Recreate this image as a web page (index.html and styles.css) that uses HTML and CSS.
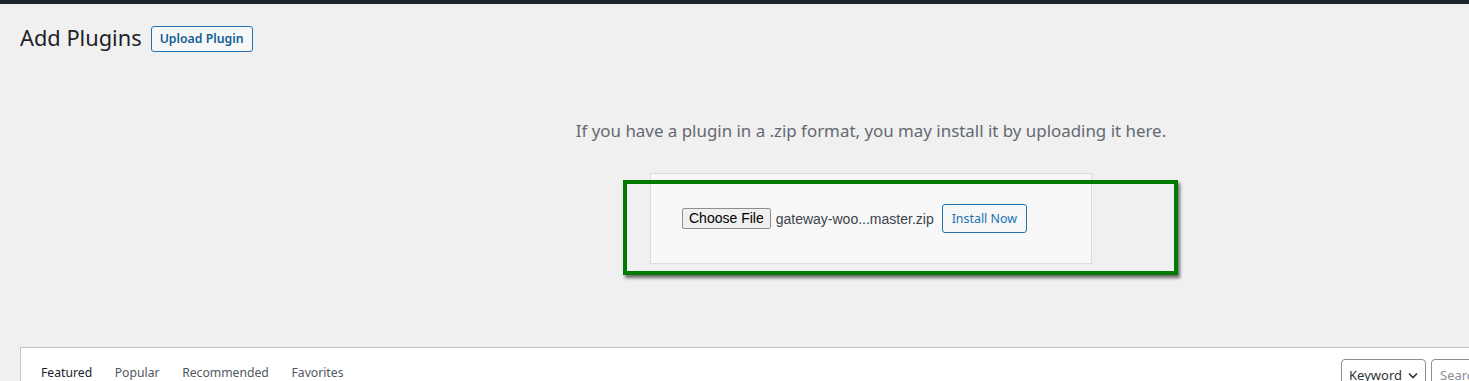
FILE: index.html
```html
<!DOCTYPE html>
<html lang="en">
<head>
<meta charset="UTF-8">
<meta name="viewport" content="width=device-width, initial-scale=1.0">
<title>Add Plugins</title>
<link rel="stylesheet" href="styles.css">
</head>
<body>

<div id="adminbar"></div>

<div class="wrap">
  <div class="page-head">
    <h1>Add Plugins</h1>
    <a href="#" class="page-title-action">Upload Plugin</a>
  </div>

  <div class="upload-plugin">
    <p class="install-help">If you have a plugin in a .zip format, you may install it by uploading it here.</p>
    <div class="upload-stage">
      <form class="wp-upload-form">
        <span class="file-btn">Choose File</span>
        <span class="file-name">gateway-woo...master.zip</span>
        <button type="button" class="install">Install Now</button>
      </form>
      <div class="highlight"></div>
    </div>
  </div>

  <div class="filter-panel">
    <ul class="filter-links">
      <li class="current">Featured</li>
      <li>Popular</li>
      <li>Recommended</li>
      <li>Favorites</li>
    </ul>
    <div class="search-form">
      <div class="select">Keyword
        <svg width="10" height="7" viewBox="0 0 10 7"><path d="M1 1.5 5 5.5 9 1.5" fill="none" stroke="#2c3338" stroke-width="1.6"/></svg>
      </div>
      <div class="search-input">Search Plugins...</div>
    </div>
  </div>
</div>

</body>
</html>
```

FILE: styles.css
```css
body {
  margin: 0;
  background-color: #f0f0f1;
  font-family: "Noto Sans", "Open Sans", sans-serif;
  color: #3c434a;
  overflow: hidden;
}

#adminbar {
  height: 4px;
  background-color: #1d2327;
}

.wrap {
  width: 1702px;
  margin-left: 20px;
}

.page-head {
  display: flex;
  align-items: center;
  gap: 9px;
  padding-top: 19px;
  height: 30px;
}

h1 {
  margin: 0;
  font-size: 21.8px;
  font-weight: 400;
  color: #1d2327;
  line-height: 30px;
}

.page-title-action {
  display: inline-block;
  border: 1px solid #2271b1;
  border-radius: 3px;
  background-color: #f6f7f7;
  color: #135e96;
  font-size: 12.3px;
  font-weight: 600;
  text-decoration: none;
  padding: 0 8px;
  line-height: 24px;
  margin-top: 1px;
}

.upload-plugin {
  text-align: center;
}

.install-help {
  margin: 66px 0 30px;
  font-size: 16.9px;
  line-height: 24px;
  color: #646970;
}

.upload-stage {
  position: relative;
  display: inline-block;
}

.wp-upload-form {
  display: flex;
  align-items: center;
  width: 378px;
  height: 89px;
  padding: 0 31px;
  border: 1px solid #dcdcde;
  background-color: #f8f8f8;
}

.file-btn {
  font-family: "Liberation Sans", Arial, sans-serif;
  font-size: 14px;
  color: #000;
  background-color: #efefef;
  border: 1px solid #8f8f8f;
  border-radius: 2px;
  padding: 1px 6px;
  line-height: 17px;
}

.file-name {
  font-family: "Liberation Sans", Arial, sans-serif;
  font-size: 14px;
  color: #3c434a;
  margin-left: 5px;
}

.install {
  margin-left: 8px;
  font-family: "Noto Sans", sans-serif;
  font-size: 12.4px;
  color: #2271b1;
  background-color: #f6f7f7;
  border: 1px solid #2271b1;
  border-radius: 3px;
  padding: 0 9px;
  height: 29px;
  line-height: 27px;
}

.highlight {
  position: absolute;
  left: -27px;
  top: 7px;
  width: 547px;
  height: 87px;
  border: 4px solid #007a00;
  box-shadow: 2px 3px 3px rgba(0, 0, 0, 0.55);
}

.filter-panel {
  margin-top: 83px;
  background-color: #fff;
  border: 1px solid #c3c4c7;
  height: 60px;
  display: flex;
  justify-content: space-between;
  align-items: flex-start;
  padding: 0 12px 0 20px;
}

.filter-links {
  display: flex;
  gap: 22.6px;
  list-style: none;
  margin: 0;
  padding: 0;
  font-size: 12.2px;
  color: #50575e;
  line-height: 18px;
  padding-top: 16px;
}

.filter-links .current {
  color: #1d2327;
}

.search-form {
  display: flex;
  gap: 5px;
  padding-top: 11px;
}

.select {
  display: flex;
  align-items: center;
  gap: 6px;
  border: 1px solid #8c8f94;
  border-radius: 4px;
  padding: 0 7px;
  height: 30px;
  font-size: 13px;
  color: #2c3338;
  background-color: #fff;
}

.search-input {
  border: 1px solid #8c8f94;
  border-radius: 4px;
  height: 30px;
  line-height: 30px;
  padding: 0 8px;
  width: 260px;
  font-size: 13px;
  color: #8c8f94;
  background-color: #fff;
}
```
